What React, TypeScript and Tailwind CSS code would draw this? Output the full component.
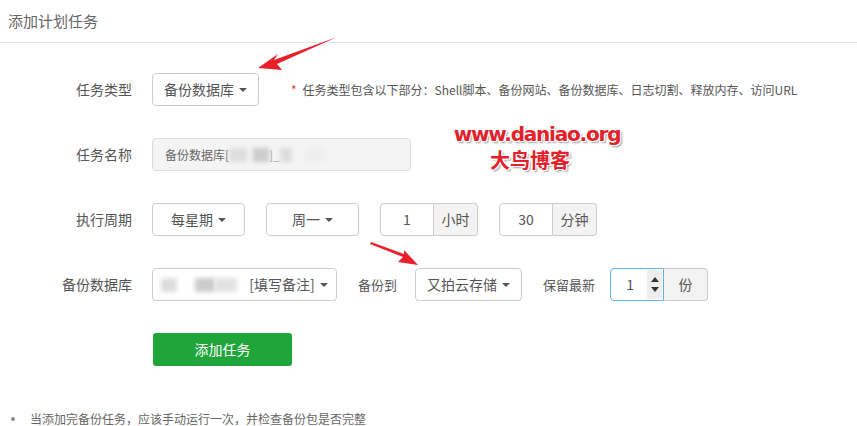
const font = { fontFamily: '"Noto Sans CJK SC", "Noto Sans", sans-serif' }

function Caret() {
  return (
    <span className="ml-[5px] inline-block w-0 h-0 border-l-[4px] border-r-[4px] border-t-[4px] border-l-transparent border-r-transparent border-t-[#555] align-middle" />
  )
}

function Select({ label, w }: { label: React.ReactNode; w: string }) {
  return (
    <div className={`${w} h-[33px] border border-[#ccc] rounded-[4px] bg-white flex items-center justify-center text-[14px] text-[#555]`}>
      {label}
      <Caret />
    </div>
  )
}

function InputGroup({ value, addon, focused }: { value: string; addon: string; focused?: boolean }) {
  return (
    <div className="flex h-[33px] w-[98px] text-[14px] text-[#555]">
      <div
        className={`w-[54px] flex items-center justify-center rounded-l-[4px] border bg-white relative ${
          focused ? 'border-[#66afe9]' : 'border-[#ccc]'
        }`}
      >
        <span className={focused ? 'mr-[14px]' : ''}>{value}</span>
        {focused && (
          <div className="absolute right-[1px] top-[1px] bottom-[1px] w-[15px] bg-[#ededed] flex flex-col items-center justify-center gap-[5px]">
            <span className="w-0 h-0 border-l-[4px] border-r-[4px] border-b-[5px] border-l-transparent border-r-transparent border-b-[#333]" />
            <span className="w-0 h-0 border-l-[4px] border-r-[4px] border-t-[5px] border-l-transparent border-r-transparent border-t-[#333]" />
          </div>
        )}
      </div>
      <div className="w-[44px] flex items-center justify-center border border-l-0 border-[#ccc] rounded-r-[4px] bg-[#f3f3f3]">
        {addon}
      </div>
    </div>
  )
}

function Row({ label, children }: { label: string; children: React.ReactNode }) {
  return (
    <div className="flex items-center h-[33px]">
      <div className="w-[132px] text-right text-[14px] text-[#555] mr-[20px]">{label}</div>
      {children}
    </div>
  )
}

function Blur({ w, c }: { w: string; c: string }) {
  return <span className={`inline-block ${w} h-[14px] ${c} blur-[2px]`} />
}

export default function App() {
  return (
    <div className="relative w-[857px] h-[426px] bg-white overflow-hidden" style={font}>
      <div className="h-[43px] border-b border-[#e4e4e4] flex items-center pl-[8px] text-[15px] text-[#666]">
        添加计划任务
      </div>

      <div className="pt-[30px] flex flex-col gap-[32px]">
        <Row label="任务类型">
          <Select label="备份数据库" w="w-[107px]" />
          <span className="ml-[32px] text-[12px] text-[#e33] mr-[6px]">*</span>
          <span className="text-[12px] text-[#555]">任务类型包含以下部分：Shell脚本、备份网站、备份数据库、日志切割、释放内存、访问URL</span>
        </Row>

        <Row label="任务名称">
          <div className="w-[259px] h-[33px] border border-[#ddd] rounded-[4px] bg-[#f4f4f4] flex items-center pl-[12px] text-[12px] text-[#666]">
            备份数据库[
            <Blur w="w-[18px]" c="bg-[#ddd]" />
            <span className="w-[6px]" />
            <Blur w="w-[16px]" c="bg-[#ccc]" />
            <span className="text-[#aaa]">]_</span>
            <Blur w="w-[12px]" c="bg-[#ddd]" />
            <span className="w-[14px]" />
            <Blur w="w-[18px]" c="bg-[#eee]" />
          </div>
        </Row>

        <Row label="执行周期">
          <Select label="每星期" w="w-[93px]" />
          <div className="ml-[21px]">
            <Select label="周一" w="w-[93px]" />
          </div>
          <div className="ml-[21px]">
            <InputGroup value="1" addon="小时" />
          </div>
          <div className="ml-[21px]">
            <InputGroup value="30" addon="分钟" />
          </div>
        </Row>

        <Row label="备份数据库">
          <Select
            w="w-[185px]"
            label={
              <span className="flex items-center">
                <Blur w="w-[16px]" c="bg-[#ddd]" />
                <span className="w-[18px]" />
                <Blur w="w-[20px]" c="bg-[#ccc]" />
                <Blur w="w-[22px]" c="bg-[#e2e2e2]" />
                <span className="w-[12px]" />
                <span>[填写备注]</span>
              </span>
            }
          />
          <span className="ml-[21px] text-[13px] text-[#555]">备份到</span>
          <div className="ml-[18px]">
            <Select label="又拍云存储" w="w-[107px]" />
          </div>
          <span className="ml-[21px] text-[13px] text-[#555]">保留最新</span>
          <div className="ml-[15px]">
            <InputGroup value="1" addon="份" focused />
          </div>
        </Row>

        <div className="pl-[153px]">
          <button className="w-[139px] h-[33px] rounded-[3px] bg-[#20a53a] text-white text-[14px]">添加任务</button>
        </div>
      </div>

      <div className="mt-[44px] flex items-center pl-[11px] text-[12px] text-[#666]">
        <span className="w-[4px] h-[4px] rounded-full bg-[#888] mr-[15px]" />
        当添加完备份任务，应该手动运行一次，并检查备份包是否完整
      </div>

      <div
        className="absolute left-[453px] top-[122px] w-[168px] text-center font-bold text-[#e2212a] leading-[25px]"
        style={{ fontFamily: '"Noto Sans CJK SC", sans-serif', textShadow: '1px 1px 0 #fff, -1px -1px 0 #fff, 1px -1px 0 #fff, -1px 1px 0 #fff, 2px 2px 2px #999' }}
      >
        <div className="text-[20px] tracking-[-1.2px]" style={{ fontFamily: 'Verdana, "DejaVu Sans", sans-serif' }}>www.daniao.org</div>
        <div className="text-[20px] -ml-[14px]">大鸟博客</div>
      </div>

      <svg className="absolute left-0 top-0 pointer-events-none" width="857" height="426">
        <path d="M337 37 L274 60 L278 54 L258 68 L282 70 L277 64 Z" fill="#e8202a" />
        <path d="M370 244 L403 257 L398 262 L418 265 L404 250 L404 254 L371 242 Z" fill="#e8202a" />
      </svg>
    </div>
  )
}
